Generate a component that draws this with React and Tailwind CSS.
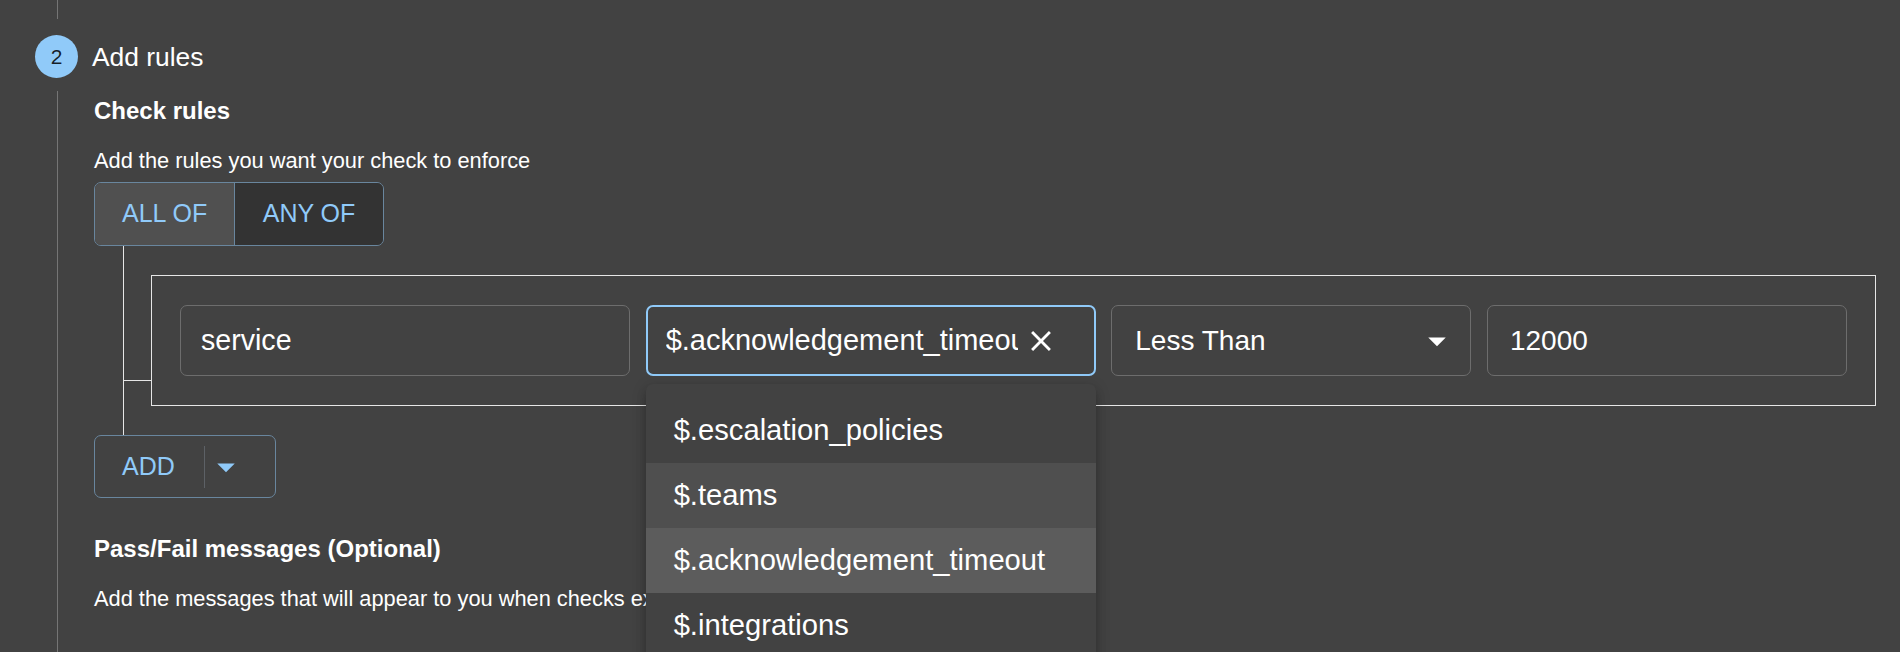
import React from "react";

function ArrowDropDown({ className }) {
  return (
    <svg viewBox="0 0 24 24" className={className} fill="currentColor">
      <path d="M7 10l5 5 5-5z" />
    </svg>
  );
}

function CloseIcon({ className }) {
  return (
    <svg viewBox="0 0 24 24" className={className} fill="currentColor">
      <path d="M19 6.41 17.59 5 12 10.59 6.41 5 5 6.41 10.59 12 5 17.59 6.41 19 12 13.41 17.59 19 19 17.59 13.41 12z" />
    </svg>
  );
}

const options = [
  { label: "$.escalation_policies", cls: "" },
  { label: "$.teams", cls: "bg-[#4f4f4f]" },
  { label: "$.acknowledgement_timeout", cls: "bg-[#5c5c5c]" },
  { label: "$.integrations", cls: "" },
];

function RuleRow() {
  return (
    <div className="grid grid-cols-[minmax(0,5fr)_minmax(0,5fr)_minmax(0,4fr)_minmax(0,4fr)] gap-x-[15.6px]">
      <div className="flex h-[71px] items-center rounded-[7px] border border-[#6d6d6d] pl-[20px] text-[28.6px]">
        service
      </div>

      <div className="relative min-w-0">
        <div className="flex h-[71px] items-center rounded-[7px] border-2 border-[#90caf9] pl-[18px] pr-[36px] text-[29px]">
          <span className="min-w-0 flex-1 overflow-hidden whitespace-nowrap">$.acknowledgement_timeout</span>
          <CloseIcon className="ml-[5.5px] h-[34px] w-[34px] shrink-0 text-white" />
        </div>
        <ul className="absolute left-0 right-0 top-[79px] z-10 rounded-[7px] bg-[#424242] py-[14px] shadow-[0_5px_5px_-3px_rgba(0,0,0,0.2),0_8px_10px_1px_rgba(0,0,0,0.14),0_3px_14px_2px_rgba(0,0,0,0.12)]">
          {options.map((o) => (
            <li key={o.label} className={"flex h-[65px] items-center pl-[28px] text-[29.2px] " + o.cls}>
              {o.label}
            </li>
          ))}
        </ul>
      </div>

      <div className="flex h-[71px] items-center rounded-[7px] border border-[#6d6d6d] pl-[23px] pr-[12px] text-[28px]">
        <span className="flex-1">Less Than</span>
        <ArrowDropDown className="h-[42px] w-[42px] shrink-0 text-white" />
      </div>

      <div className="flex h-[71px] items-center rounded-[7px] border border-[#6d6d6d] pl-[22px] text-[28px]">
        12000
      </div>
    </div>
  );
}

export default function App() {
  return (
    <div className="h-[652px] w-[1900px] overflow-hidden bg-[#424242] font-['Liberation_Sans',Arial,sans-serif] text-white">
      <div className="flex h-full flex-col pl-[35px] pr-[24px]">
        <div className="ml-[22px] h-[19px] w-px shrink-0 bg-[#757575]" />

        <div className="mt-[16px] flex shrink-0 items-center gap-[14px]">
          <div className="flex h-[43px] w-[43px] items-center justify-center rounded-full bg-[#90caf9] text-[21px] text-black/85">
            2
          </div>
          <h2 className="text-[26.4px] leading-[30px]">Add rules</h2>
        </div>

        <div className="ml-[22px] mt-[13px] flex-1 border-l border-[#757575] pl-[36px]">
          <h3 className="mt-[6px] text-[24px] font-semibold leading-[28px]">Check rules</h3>
          <p className="mt-[22px] text-[21.8px] leading-[28px]">Add the rules you want your check to enforce</p>

          <div className="mt-[7px] flex h-[64px] w-fit overflow-hidden rounded-[7px] border border-[#69869e] text-[25px] text-[#90caf9]">
            <button className="bg-[#505050] px-[27px]">ALL OF</button>
            <button className="border-l border-[#69869e] bg-[#333333] px-[27.5px]">ANY OF</button>
          </div>

          <div className="ml-[29px] border-l border-[#e6e6e6] py-[29px]">
            <div className="flex items-end">
              <div className="mb-[25px] h-px w-[27px] shrink-0 bg-[#e6e6e6]" />
              <div className="flex-1 border border-[#e6e6e6] px-[28px] py-[29px]">
                <RuleRow />
              </div>
            </div>
          </div>

          <div className="flex h-[63px] w-[182px] items-center rounded-[7px] border border-[#69869e] text-[#90caf9]">
            <span className="w-[109px] pl-[27px] text-[25px]">ADD</span>
            <div className="h-[42px] w-px bg-[#5d6166]" />
            <ArrowDropDown className="h-[42px] w-[42px]" />
          </div>

          <h3 className="mt-[37px] text-[24px] font-semibold leading-[28px]">Pass/Fail messages (Optional)</h3>
          <p className="mt-[22px] text-[21.8px] leading-[28px]">
            Add the messages that will appear to you when checks execute
          </p>
        </div>
      </div>
    </div>
  );
}
